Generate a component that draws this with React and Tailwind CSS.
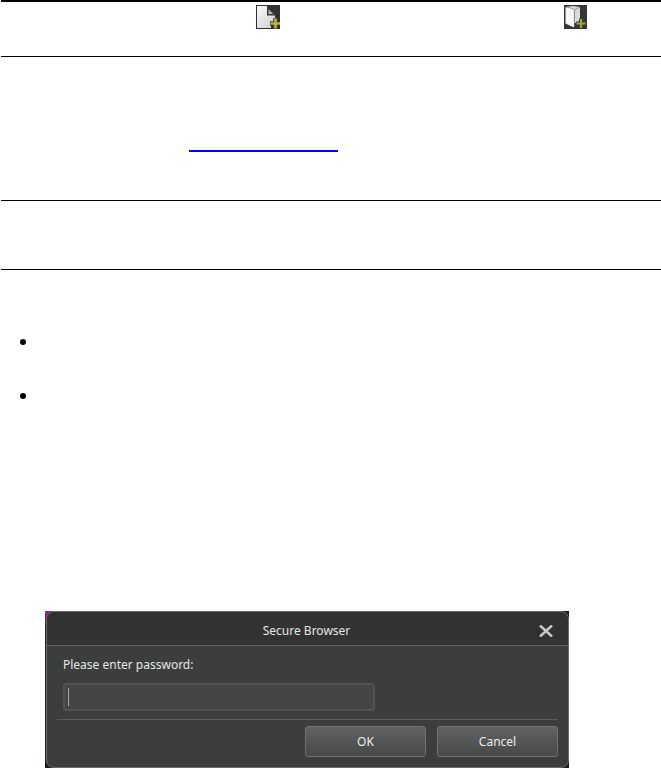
import React from 'react';

function NewPageIcon() {
    return (
        <svg viewBox="0 0 24 24" className="size-6" role="img" aria-label="New page">
            <defs>
                <linearGradient id="sheet" x1="0" y1="0" x2="1" y2="1">
                    <stop offset="0" stopColor="#fafafa" />
                    <stop offset="1" stopColor="#cfcfcf" />
                </linearGradient>
            </defs>
            <rect width="24" height="24" fill="#303132" />
            <path d="M1 1H11V10.5H19V17H15V23H1Z" fill="url(#sheet)" />
            <path d="M12 3L18.5 9.5H12Z" fill="#b9bbbb" stroke="#3d3f3f" strokeWidth="1.2" />
            <path d="M19.5 13V23.5M14 18.5H24" stroke="#3e3e25" strokeWidth="4.5" />
            <path d="M19.5 13.5V23.5M14.5 18.5H24" stroke="#b9b34a" strokeWidth="2.6" />
        </svg>
    );
}

function NewFolderIcon() {
    return (
        <svg viewBox="0 0 23 24" className="h-6 w-[23px]" role="img" aria-label="New folder">
            <rect width="23" height="24" fill="#353637" />
            <path d="M3 1.8L9 1L16 2V16L10 18.5Z" fill="#d9dada" />
            <path d="M3 1.8L10.5 4.5L16 2.2" fill="none" stroke="#7b7c7c" strokeWidth="0.7" />
            <path d="M1.5 2L10 5V22.5L1.5 18.5Z" fill="#f8f8f8" />
            <path d="M10.4 5V22" stroke="#6a6b6b" strokeWidth="0.8" />
            <path d="M17 13.5V23M12 18.5H22" stroke="#3e3e25" strokeWidth="4" />
            <path d="M17 14V23M12.5 18.5H21.5" stroke="#a0a148" strokeWidth="2.2" />
        </svg>
    );
}

function DialogButton({ children }) {
    return (
        <button
            type="button"
            className="h-[31px] w-[121px] rounded-[3px] border border-[#707373] bg-linear-to-b from-[#606362] to-[#464948] text-xs text-[#ededed]"
        >
            {children}
        </button>
    );
}

function PasswordDialog() {
    return (
        <div className="w-full max-w-[524px] bg-linear-to-br from-[#a0209a] from-0% via-[#26182a] via-5% to-[#26182a] pl-px">
            <form
                role="dialog"
                aria-labelledby="dialog-title"
                className="rounded-lg border border-[#6a6b6b] bg-[#3c3e3d] font-['Noto_Sans','Open_Sans',sans-serif] text-xs text-[#e6e6e6]"
            >
                <header className="flex h-[34px] items-center rounded-t-lg border-b border-[#626463] bg-[#323232] pt-1 pr-3 pl-[30px]">
                    <h2 id="dialog-title" className="flex-1 text-center">Secure Browser</h2>
                    <button type="button" aria-label="Close" className="flex size-5 items-center justify-center">
                        <svg viewBox="0 0 14 12" className="h-3 w-3.5" fill="none" stroke="#c9c9c9" strokeWidth="2.5">
                            <path d="M1 0.5L13 11.5M13 0.5L1 11.5" />
                        </svg>
                    </button>
                </header>
                <div className="px-[10px] pt-[11px] pb-[10px]">
                    <div className="px-1.5">
                        <label htmlFor="password" className="block leading-4">Please enter password:</label>
                        <div className="mt-[10px] flex h-7 max-w-[312px] items-center rounded-[3px] border-2 border-[#515352] bg-[#444645] px-[3px]">
                            <span className="h-[18px] w-px bg-[#a4a5a5]" />
                            <input id="password" type="password" className="h-full min-w-0 flex-1 bg-transparent outline-none" />
                        </div>
                    </div>
                    <div className="mt-2 flex justify-end gap-[11px] border-t border-[#5b5d5c] pt-1.5">
                        <DialogButton>OK</DialogButton>
                        <DialogButton>Cancel</DialogButton>
                    </div>
                </div>
            </form>
        </div>
    );
}

function App() {
    return (
        <main className="bg-white pl-px">
            <section className="h-14 border-t-2 border-black pt-[3px]">
                <div className="flex gap-[284px] pl-[255px]">
                    <NewPageIcon />
                    <NewFolderIcon />
                </div>
            </section>
            <section className="h-36 border-t border-black pt-[75px] pl-[188px]">
                <a href="#password" aria-label="Password" className="block h-5 w-[149px] border-b-2 border-[#0000ff]" />
            </section>
            <section className="h-[69px] border-t border-black" />
            <section className="border-t border-black pt-[69px]">
                <ul className="flex flex-col gap-12 pl-[19px]">
                    <li className="size-1.5 rounded-full bg-black" />
                    <li className="size-1.5 rounded-full bg-black" />
                </ul>
                <div className="pt-[212px] pl-11">
                    <PasswordDialog />
                </div>
            </section>
        </main>
    );
}

export default App;
